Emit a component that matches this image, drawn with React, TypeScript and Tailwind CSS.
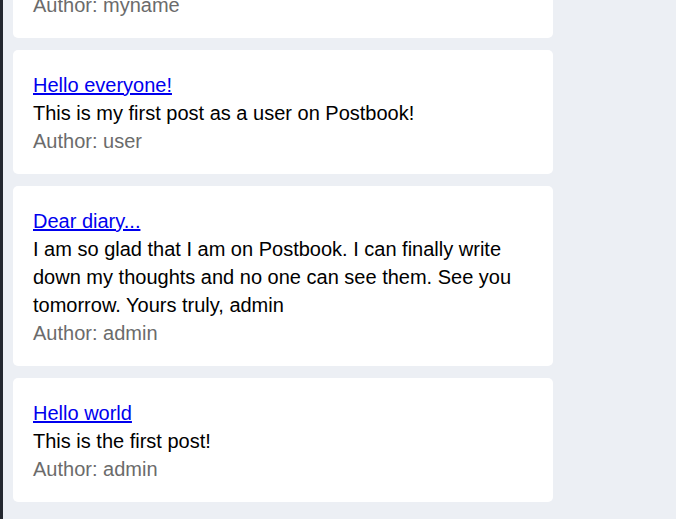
import React from "react";

interface Post {
  title: string;
  body: string;
  author: string;
}

const posts: Post[] = [
  { title: "My post", body: "Some text here.", author: "myname" },
  {
    title: "Hello everyone!",
    body: "This is my first post as a user on Postbook!",
    author: "user",
  },
  {
    title: "Dear diary...",
    body: "I am so glad that I am on Postbook. I can finally write down my thoughts and no one can see them. See you tomorrow. Yours truly, admin",
    author: "admin",
  },
  { title: "Hello world", body: "This is the first post!", author: "admin" },
];

const PostCard = ({ post }: { post: Post }) => (
  <div className="bg-white rounded-[5px] px-5 pt-[21px] pb-[19px] leading-7 text-[20px]">
    <a href="#" className="text-[#0000ee] underline">
      {post.title}
    </a>
    <p className="text-black">{post.body}</p>
    <p className="text-[#6b6b6b]">Author: {post.author}</p>
  </div>
);

export default function App() {
  return (
    <div
      className="h-[519px] overflow-hidden bg-[#eceff4] border-l-[3px] border-[#23272f]"
      style={{ fontFamily: '"Liberation Sans", Arial, sans-serif' }}
    >
      <div className="-mt-[86px] pl-[10px] w-[550px] flex flex-col gap-3">
        {posts.map((post, i) => (
          <PostCard key={i} post={post} />
        ))}
      </div>
    </div>
  );
}
